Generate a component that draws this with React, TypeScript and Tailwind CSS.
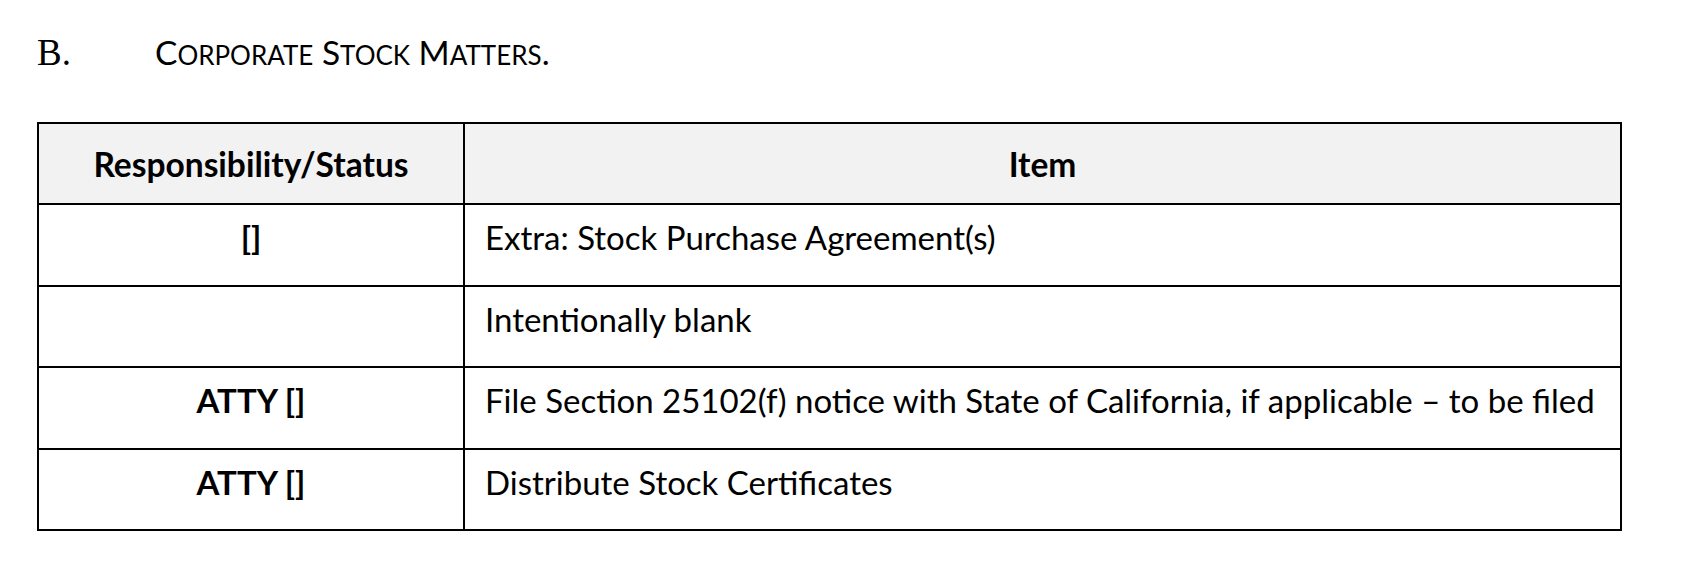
const rows = [
  { status: "[]", item: "Extra: Stock Purchase Agreement(s)" },
  { status: "", item: "Intentionally blank" },
  { status: "ATTY []", item: "File Section 25102(f) notice with State of California, if applicable – to be filed" },
  { status: "ATTY []", item: "Distribute Stock Certificates" },
];

const body = "font-['Lato',sans-serif]";

export default function App() {
  return (
    <div className="min-h-screen bg-white text-black pl-[37px] pt-[32px]">
      {/* heading */}
      <div className="flex items-baseline leading-[40px]">
        <span className="w-[118px] font-['Liberation_Serif',serif] text-[37px]">B.</span>
        <span className={`${body} text-[33.5px]`}>
          C<span className="text-[26px] uppercase">orporate</span> S
          <span className="text-[26px] uppercase">tock</span> M
          <span className="text-[26px] uppercase">atters</span>.
        </span>
      </div>

      {/* checklist table */}
      <table className={`${body} mt-[47px] w-[1585px] border-collapse table-fixed text-[33px] leading-[38px]`}>
        <thead>
          <tr className="bg-[#f2f2f2]">
            <th className="w-[426px] h-[81px] border-2 border-black text-[33.5px] font-bold text-center align-middle">
              Responsibility/Status
            </th>
            <th className="h-[81px] border-2 border-black text-[33.5px] font-bold text-center align-middle">Item</th>
          </tr>
        </thead>
        <tbody>
          {rows.map((r, i) => (
            <tr key={i}>
              <td className="h-[81.5px] border-2 border-black pt-[13px] align-top text-center font-bold">
                {r.status}
              </td>
              <td className="h-[81.5px] border-2 border-black pt-[13px] pl-[20px] align-top font-normal">
                {r.item}
              </td>
            </tr>
          ))}
        </tbody>
      </table>
    </div>
  );
}
